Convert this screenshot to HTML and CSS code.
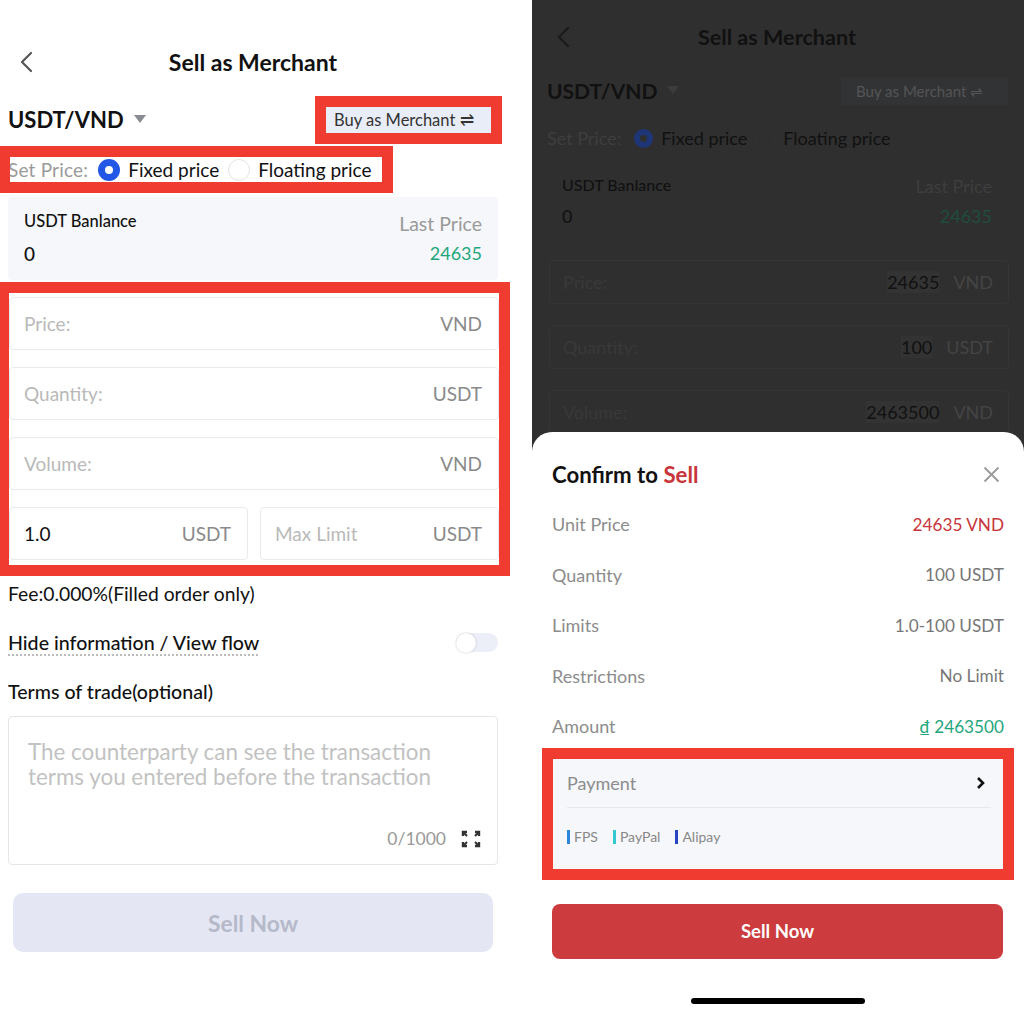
FILE: index.html
```html
<!DOCTYPE html>
<html lang="en">
<head>
    <meta charset="UTF-8">
    <meta name="viewport" content="width=device-width, initial-scale=1.0">
    <title>Sell as Merchant</title>
    <link rel="stylesheet" href="styles.css">
</head>
<body>
    <!-- Left: the order form -->
    <div class="screen">
        <div class="header">
            <svg class="back" width="14" height="22" viewBox="0 0 14 22"><polyline points="11,2 2,11 11,20" fill="none" stroke="#555" stroke-width="2.2" stroke-linecap="round" stroke-linejoin="round"/></svg>
            <div class="title">Sell as Merchant</div>
            <div></div>
        </div>

        <div class="pair-row">
            <div class="pair">USDT/VND <span class="caret"></span></div>
            <div class="switch-btn mark">Buy as Merchant &#8652;</div>
        </div>

        <div class="price-type mark">
            <span class="muted lead">Set Price:</span>
            <span class="radio checked"></span>
            <span>Fixed price</span>
            <span class="radio"></span>
            <span>Floating price</span>
        </div>

        <div class="balance">
            <div class="balance-label">USDT Banlance</div>
            <div class="muted right">Last Price</div>
            <div class="balance-value">0</div>
            <div class="green right last">24635</div>
        </div>

        <div class="fields mark">
            <div class="field"><span class="placeholder">Price:</span><span class="unit">VND</span></div>
            <div class="field"><span class="placeholder">Quantity:</span><span class="unit">USDT</span></div>
            <div class="field"><span class="placeholder">Volume:</span><span class="unit">VND</span></div>
            <div class="field-pair">
                <div class="field"><span>1.0</span><span class="unit">USDT</span></div>
                <div class="field"><span class="placeholder">Max Limit</span><span class="unit">USDT</span></div>
            </div>
        </div>

        <div class="line fee">Fee:0.000%(Filled order only)</div>
        <div class="line medium">
            <span class="dotted">Hide information / View flow</span>
            <span class="toggle"><span class="knob"></span></span>
        </div>
        <div class="line medium">Terms of trade(optional)</div>

        <div class="terms">
            <div class="terms-text">The counterparty can see the transaction terms you entered before the transaction</div>
            <div class="terms-foot">
                <span>0/1000</span>
                <svg width="20" height="18" viewBox="0 0 20 18"><path d="M2 6V2h4M14 2h4v4M18 12v4h-4M6 16H2v-4" fill="none" stroke="#333" stroke-width="2.4"/><path d="M3 3l3 3M17 3l-3 3M17 15l-3-3M3 15l3-3" stroke="#333" stroke-width="2"/></svg>
            </div>
        </div>

        <div class="sell-btn disabled">Sell Now</div>
    </div>

    <!-- Right: same form dimmed, with the confirm sheet on top -->
    <div class="screen dim">
        <div class="header">
            <svg class="back" width="14" height="22" viewBox="0 0 14 22"><polyline points="11,2 2,11 11,20" fill="none" stroke="#1a1a1a" stroke-width="2.2" stroke-linecap="round" stroke-linejoin="round"/></svg>
            <div class="title">Sell as Merchant</div>
            <div></div>
        </div>

        <div class="pair-row">
            <div class="pair">USDT/VND <span class="caret"></span></div>
            <div class="switch-btn">Buy as Merchant &#8652;</div>
        </div>

        <div class="price-type">
            <span class="muted">Set Price:</span>
            <span class="radio checked"></span>
            <span>Fixed price</span>
            <span class="radio"></span>
            <span>Floating price</span>
        </div>

        <div class="balance">
            <div class="balance-label">USDT Banlance</div>
            <div class="muted right">Last Price</div>
            <div class="balance-value">0</div>
            <div class="green right">24635</div>
        </div>

        <div class="fields">
            <div class="field"><span class="placeholder">Price:</span><span class="value">24635</span><span class="unit">VND</span></div>
            <div class="field"><span class="placeholder">Quantity:</span><span class="value">100</span><span class="unit">USDT</span></div>
            <div class="field"><span class="placeholder">Volume:</span><span class="value">2463500</span><span class="unit">VND</span></div>
        </div>

        <div class="sheet">
            <div class="sheet-head">
                <div class="sheet-title">Confirm to <span class="red">Sell</span></div>
                <svg width="17" height="17" viewBox="0 0 17 17"><path d="M1.5 1.5l14 14M15.5 1.5l-14 14" stroke="#9a9a9a" stroke-width="1.8"/></svg>
            </div>

            <div class="row"><span>Unit Price</span><span class="red">24635 VND</span></div>
            <div class="row"><span>Quantity</span><span>100 USDT</span></div>
            <div class="row"><span>Limits</span><span>1.0-100 USDT</span></div>
            <div class="row"><span>Restrictions</span><span>No Limit</span></div>
            <div class="row"><span>Amount</span><span class="green">&#8363; 2463500</span></div>

            <div class="payment mark">
                <div class="payment-head">
                    <span>Payment</span>
                    <svg width="9" height="14" viewBox="0 0 9 14"><polyline points="2,2 7,7 2,12" fill="none" stroke="#111" stroke-width="2.6"/></svg>
                </div>
                <div class="tags">
                    <span class="tag fps">FPS</span>
                    <span class="tag paypal">PayPal</span>
                    <span class="tag alipay">Alipay</span>
                </div>
            </div>

            <div class="sell-btn">Sell Now</div>
            <div class="home-bar"></div>
        </div>
    </div>
</body>
</html>
```

FILE: styles.css
```css
body {
    margin: 0;
    font-family: Lato, "Noto Sans", sans-serif;
    color: #111;
    display: flex;
    width: 1024px;
    height: 1024px;
    overflow: hidden;
    background-color: #fff;
}

/* red annotation frames drawn over the screenshot */
.mark {
    outline: 11px solid #f03c30;
}

.screen {
    width: 532px;
    height: 1024px;
    padding-left: 8px;
    box-sizing: border-box;
    background-color: #fff;
    flex-shrink: 0;
}

.screen > * {
    width: 490px;
}

.header {
    display: grid;
    grid-template-columns: 1fr auto 1fr;
    align-items: center;
    height: 50px;
    margin-top: 37px;
}

.back {
    margin-left: 12px;
}

.title {
    font-size: 23px;
    font-weight: 700;
}

.pair-row {
    display: flex;
    justify-content: space-between;
    align-items: center;
    height: 50px;
    margin-top: 7px;
}

.pair {
    font-size: 22px;
    font-weight: 700;
    display: flex;
    align-items: center;
}

.caret {
    width: 0;
    height: 0;
    border-left: 6px solid transparent;
    border-right: 6px solid transparent;
    border-top: 8px solid #8a8c94;
    margin-left: 10px;
}

.switch-btn {
    width: 165px;
    height: 26px;
    box-sizing: border-box;
    margin-right: 7px;
    margin-top: 2px;
    padding-left: 8px;
    background-color: #e9edf7;
    font-size: 16.5px;
    color: #333;
    display: flex;
    align-items: center;
}

.price-type {
    display: flex;
    align-items: center;
    width: 372px !important;
    height: 25px;
    margin: 13px 0 0 2px;
    font-size: 19px;
    background-color: #fff;
}

.lead {
    margin-left: -2px;
    letter-spacing: 0.2px;
}

.muted {
    color: #9a9a9a;
}

.radio {
    width: 22px;
    height: 22px;
    box-sizing: border-box;
    border-radius: 50%;
    border: 1px solid #e4e4e4;
    margin: 0 8px 0 9px;
}

.radio.checked {
    border: 7px solid #2357e6;
    margin-left: 10px;
}

.balance {
    display: grid;
    grid-template-columns: 1fr 1fr;
    grid-template-rows: 30px 30px;
    align-items: center;
    height: 83px;
    margin-top: 15px;
    padding: 11px 16px 0;
    box-sizing: border-box;
    background-color: #f5f7fa;
    border-radius: 4px;
    font-size: 19.5px;
}

.balance-label {
    font-size: 16.5px;
    font-weight: 500;
    margin-top: -4px;
}

.balance-value {
    font-size: 19px;
    font-weight: 500;
}

.last {
    font-size: 18px;
}

.right {
    text-align: right;
}

.green {
    color: #1fa67c;
}

.red {
    color: #c8353a;
}

.fields {
    margin: 13px 0 0 1px;
    padding: 4px 0 5px;
    background-color: #fff;
    display: flex;
    flex-direction: column;
    gap: 17px;
}

.field {
    display: flex;
    align-items: center;
    height: 53px;
    box-sizing: border-box;
    padding: 0 16px 0 14px;
    border: 1px solid #e8eaee;
    border-radius: 4px;
    font-size: 19px;
}

.field .placeholder {
    color: #b9b9b9;
    flex: 1;
}

.field span:first-child {
    flex: 1;
}

.unit {
    color: #8a8a8a;
}

.field-pair {
    display: flex;
    gap: 12px;
}

.field-pair .field {
    flex: 1;
}

.line {
    display: flex;
    justify-content: space-between;
    align-items: center;
    height: 49px;
    font-size: 19.3px;
}

.line.fee {
    margin-top: 4px;
}

.medium {
    font-weight: 500;
    font-size: 19.6px;
}

.dotted {
    text-decoration: underline dotted #bbb;
    text-underline-offset: 5px;
}

.toggle {
    width: 42px;
    height: 19px;
    border-radius: 10px;
    background-color: #eceff8;
    display: flex;
    align-items: center;
}

.knob {
    width: 20px;
    height: 20px;
    border-radius: 50%;
    background-color: #fff;
    box-shadow: 0 0 2px rgba(0, 0, 0, 0.25);
}

.terms {
    height: 149px;
    box-sizing: border-box;
    border: 1px solid #e6e6e6;
    border-radius: 4px;
    padding: 22px 16px 15px 19px;
    display: flex;
    flex-direction: column;
    justify-content: space-between;
}

.terms-text {
    font-size: 22.4px;
    line-height: 25px;
    color: #c2c2c2;
    width: 440px;
}

.terms-foot {
    display: flex;
    justify-content: flex-end;
    align-items: center;
    gap: 15px;
    font-size: 17.5px;
    color: #9a9a9a;
}

.sell-btn {
    height: 59px;
    margin: 28px 5px 0;
    width: 480px !important;
    border-radius: 10px;
    background-color: #cc3b3d;
    color: #fff;
    font-size: 22.8px;
    font-weight: 700;
    display: flex;
    justify-content: center;
    align-items: center;
}

.sell-btn.disabled {
    background-color: #e4e7f3;
    color: #b5b9c9;
}

/* dimmed copy under the confirm sheet */
.screen.dim {
    width: 492px;
    padding-left: 15px;
    background-color: #2f2f2f;
    position: relative;
    color: #111;
}

.dim > * {
    width: 460px;
}

.dim .header {
    margin-top: 12px;
}

.dim .back {
    margin-left: 10px;
}

.dim .title {
    font-size: 21.6px;
}

.dim .pair-row {
    height: 40px;
    margin-top: 8px;
}

.dim .pair {
    font-size: 21px;
}

.dim .caret {
    border-top-color: #3c3c3c;
}

.dim .switch-btn {
    width: 167px;
    height: 28px;
    margin-right: -1px;
    padding-left: 15px;
    background-color: #323335;
    color: #555;
    font-size: 15px;
}

.dim .price-type {
    width: 360px !important;
    height: 26px;
    margin: 15px 0 0;
    font-size: 18px;
    background-color: transparent;
}

.dim .muted {
    color: #3e3e3e;
}

.dim .radio {
    width: 19px;
    height: 19px;
    border-color: #333;
}

.dim .radio.checked {
    border: 6px solid #1e3677;
    margin-left: 13px;
}

.dim .radio:not(.checked) {
    margin: 0 8px 0 9px;
}

.dim .balance {
    background-color: transparent;
    height: 77px;
    margin-top: 12px;
    padding: 8px 15px 0;
    grid-template-rows: 30px 30px;
    font-size: 18px;
}

.dim .balance-label {
    font-size: 16px;
}

.dim .balance-value {
    font-size: 18px;
}

.dim .green {
    color: #1f4c3d;
}

.dim .fields {
    margin: 20px 0 0 2px;
    padding: 0;
    gap: 21px;
    background-color: transparent;
}

.dim .field {
    height: 44px;
    border-color: #353535;
    padding: 0 15px 0 13px;
    font-size: 18px;
}

.dim .field .placeholder {
    color: #393939;
}

.dim .value {
    color: #111;
    background-color: #333;
    margin-right: 14px;
}

.dim .unit {
    color: #444;
}

.sheet {
    position: absolute;
    top: 432px;
    left: 0;
    bottom: 0;
    width: 492px !important;
    box-sizing: border-box;
    padding: 28px 20px 0;
    background-color: #fff;
    border-radius: 20px 20px 0 0;
}

.sheet-head {
    display: flex;
    justify-content: space-between;
    align-items: center;
    height: 28px;
    padding-right: 4px;
}

.sheet-title {
    font-size: 22.2px;
    font-weight: 700;
}

.sheet-head + .row {
    margin-top: 11px;
}

.row {
    display: flex;
    justify-content: space-between;
    align-items: center;
    height: 50.5px;
    font-size: 18px;
    color: #8c8c8c;
}

.row span:last-child {
    color: #777;
    font-size: 17.2px;
}

.row span.red {
    color: #c8353a;
}

.row span.green {
    color: #1fa67c;
}

.payment {
    margin: 7px 0 0 1px;
    width: 450px;
    height: 110px;
    box-sizing: border-box;
    padding: 0 12px 0 14px;
    background-color: #f5f7fa;
}

.payment-head {
    display: flex;
    justify-content: space-between;
    align-items: center;
    height: 48px;
    padding-right: 6px;
    border-bottom: 1px solid #e6e8ee;
    font-size: 18px;
    color: #8c8c8c;
}

.tags {
    display: flex;
    align-items: center;
    gap: 15px;
    height: 58px;
    font-size: 14px;
    color: #888;
}

.tag {
    border-left: 3px solid;
    padding-left: 4px;
    line-height: 14px;
}

.fps {
    border-color: #2b87d9;
}

.paypal {
    border-color: #35c8cf;
}

.alipay {
    border-color: #2745c2;
}

.sheet .sell-btn {
    width: 451px !important;
    height: 55px;
    margin: 35px 0 0;
    border-radius: 8px;
    font-size: 18.5px;
}

.home-bar {
    width: 174px;
    height: 6px;
    margin: 39px auto 0;
    border-radius: 3px;
    background-color: #000;
}
```
